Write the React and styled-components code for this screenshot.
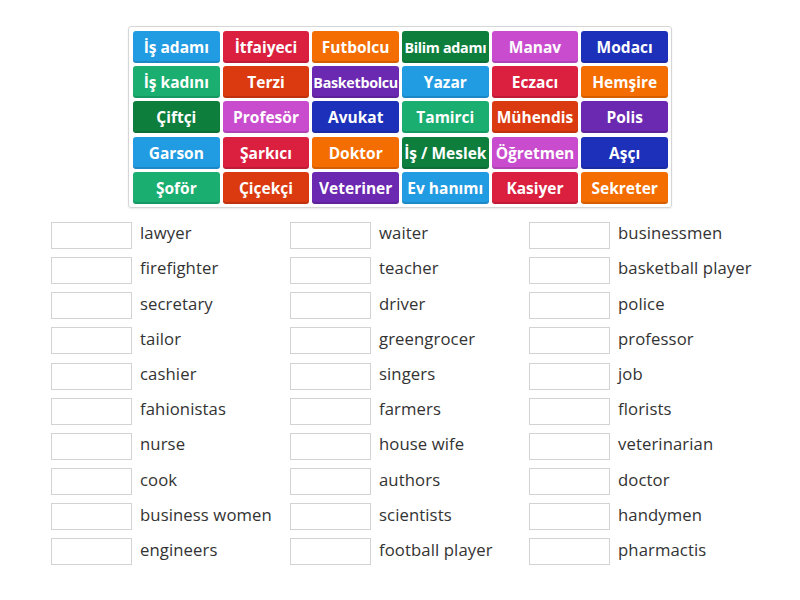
import styled, { createGlobalStyle } from 'styled-components';

const GlobalStyle = createGlobalStyle`
  body {
    margin: 0;
    background: #ffffff;
    font-family: 'Open Sans', 'Noto Sans', sans-serif;
  }
`;

const COLORS = {
  blue: '#219be2',
  red: '#da1f3f',
  orange: '#f36d00',
  green: '#0e7e3d',
  pink: '#c84ccd',
  navy: '#1d30b9',
  teal: '#1aae70',
  rust: '#db3a10',
  purple: '#6b28b0',
};

const tiles = [
  ['İş adamı', 'blue'], ['İtfaiyeci', 'red'], ['Futbolcu', 'orange'],
  ['Bilim adamı', 'green', true], ['Manav', 'pink'], ['Modacı', 'navy'],
  ['İş kadını', 'teal'], ['Terzi', 'rust'], ['Basketbolcu', 'purple', true],
  ['Yazar', 'blue'], ['Eczacı', 'red'], ['Hemşire', 'orange'],
  ['Çiftçi', 'green'], ['Profesör', 'pink'], ['Avukat', 'navy'],
  ['Tamirci', 'teal'], ['Mühendis', 'rust'], ['Polis', 'purple'],
  ['Garson', 'blue'], ['Şarkıcı', 'red'], ['Doktor', 'orange'],
  ['İş / Meslek', 'green'], ['Öğretmen', 'pink'], ['Aşçı', 'navy'],
  ['Şoför', 'teal'], ['Çiçekçi', 'rust'], ['Veteriner', 'purple'],
  ['Ev hanımı', 'blue'], ['Kasiyer', 'red'], ['Sekreter', 'orange'],
];

const columns = [
  ['lawyer', 'firefighter', 'secretary', 'tailor', 'cashier', 'fahionistas', 'nurse', 'cook', 'business women', 'engineers'],
  ['waiter', 'teacher', 'driver', 'greengrocer', 'singers', 'farmers', 'house wife', 'authors', 'scientists', 'football player'],
  ['businessmen', 'basketball player', 'police', 'professor', 'job', 'florists', 'veterinarian', 'doctor', 'handymen', 'pharmactis'],
];

const Page = styled.div`
  padding-top: 26px;
  display: flex;
  flex-direction: column;
`;

const Board = styled.div`
  align-self: center;
  width: 544px;
  box-sizing: border-box;
  padding: 4px 3px 3px 4px;
  border: 1px solid #d6d6d6;
  border-radius: 3px;
  display: grid;
  grid-template-columns: repeat(6, 1fr);
  grid-auto-rows: 32px;
  gap: 3.2px 3px;
  box-shadow: 0 1px 2px rgba(0, 0, 0, 0.08);
`;

const Tile = styled.div`
  background: ${(p) => p.$color};
  border-radius: 3px;
  color: #ffffff;
  font-weight: 700;
  font-size: ${(p) => (p.$small ? '14.3px' : '15.5px')};
  letter-spacing: ${(p) => (p.$small ? '-0.3px' : '0')};
  display: flex;
  align-items: center;
  justify-content: center;
  white-space: nowrap;
  overflow: hidden;
  box-shadow: inset 0 -2px 0 rgba(0, 0, 0, 0.12);
`;

const Answers = styled.div`
  margin-top: 14px;
  padding-left: 51px;
  display: grid;
  grid-template-columns: repeat(3, 239px);
`;

const Column = styled.div`
  display: flex;
  flex-direction: column;
  gap: 8.2px;
`;

const Row = styled.div`
  display: flex;
  align-items: center;
  height: 27px;
`;

const Slot = styled.div`
  width: 81px;
  height: 27px;
  box-sizing: border-box;
  border: 1px solid #d3d3d3;
  background: #ffffff;
  flex-shrink: 0;
`;

const Label = styled.span`
  margin-left: 8px;
  padding-bottom: 5px;
  font-size: 16.7px;
  letter-spacing: 0.1px;
  color: #333333;
  white-space: nowrap;
`;

export default function App() {
  return (
    <>
      <GlobalStyle />
      <Page>
        <Board>
          {tiles.map(([text, color, small]) => (
            <Tile key={text} $color={COLORS[color]} $small={small}>
              {text}
            </Tile>
          ))}
        </Board>
        <Answers>
          {columns.map((col, i) => (
            <Column key={i}>
              {col.map((word) => (
                <Row key={word}>
                  <Slot />
                  <Label>{word}</Label>
                </Row>
              ))}
            </Column>
          ))}
        </Answers>
      </Page>
    </>
  );
}
